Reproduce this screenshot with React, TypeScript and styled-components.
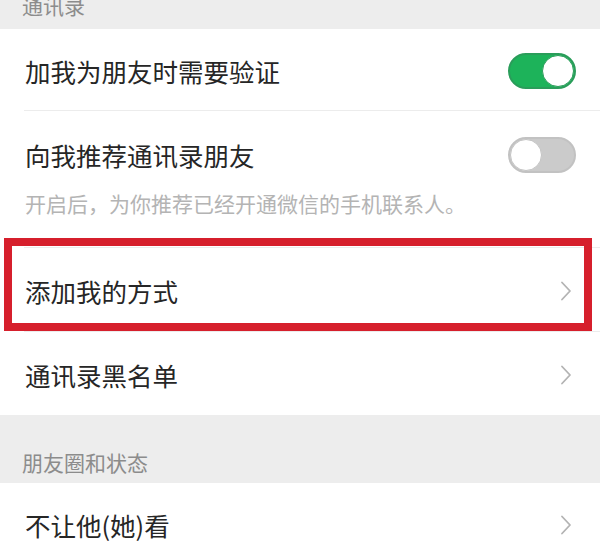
import React from "react";
import styled, { createGlobalStyle } from "styled-components";

const GlobalStyle = createGlobalStyle`
  html, body {
    margin: 0;
    padding: 0;
    background: #ededed;
    overflow: hidden;
  }
  body {
    font-family: "Noto Sans CJK SC", "Noto Sans", sans-serif;
    -webkit-font-smoothing: antialiased;
  }
`;

const Page = styled.div`
  width: 600px;
  height: 542px;
  overflow: hidden;
  display: flex;
  flex-direction: column;
  background: #ededed;
`;

const SectionHeader = styled.div<{ $height: number; $pb: number }>`
  height: ${(p) => p.$height}px;
  flex: none;
  box-sizing: border-box;
  display: flex;
  align-items: flex-end;
  padding: 0 22px ${(p) => p.$pb}px;
  font-size: 21px;
  line-height: 21px;
  color: #8c8c8c;
  background: #ededed;
`;

const Group = styled.div`
  background: #ffffff;
  display: flex;
  flex-direction: column;
  flex: none;
`;

const Cell = styled.div<{ $divider?: boolean; $height?: number }>`
  position: relative;
  height: ${(p) => p.$height ?? 82}px;
  box-sizing: border-box;
  padding: 2px 24px 0 25px;
  display: flex;
  align-items: center;
  justify-content: space-between;
  ${(p) =>
    p.$divider
      ? `&::after {
    content: "";
    position: absolute;
    left: 24px;
    right: 0;
    bottom: 0;
    height: 1px;
    background: #ececec;
  }`
      : ""}
`;

const StackCell = styled.div`
  position: relative;
  box-sizing: border-box;
  padding: 27px 24px 31px 25px;
  display: flex;
  flex-direction: column;
  gap: 17px;
  &::after {
    content: "";
    position: absolute;
    left: 24px;
    right: 0;
    bottom: 0;
    height: 1px;
    background: #ececec;
  }
`;

const Line = styled.div`
  display: flex;
  align-items: center;
  justify-content: space-between;
  height: 34px;
`;

const Title = styled.span`
  font-size: 25.5px;
  line-height: 34px;
  color: #262626;
  white-space: nowrap;
`;

const Hint = styled.div`
  font-size: 21px;
  line-height: 28px;
  color: #b4b4b4;
  white-space: nowrap;
`;

const Switch = styled.div<{ $on?: boolean }>`
  position: relative;
  width: 68px;
  height: 36px;
  box-sizing: border-box;
  border-radius: 18px;
  flex: none;
  background: ${(p) => (p.$on ? "#1db35a" : "#cbcbcb")};
  border: 2px solid ${(p) => (p.$on ? "#2a9d5a" : "#c2c2c2")};
  &::after {
    content: "";
    position: absolute;
    top: 0;
    ${(p) => (p.$on ? "right: 0;" : "left: 0;")}
    width: 32px;
    height: 32px;
    box-sizing: border-box;
    border-radius: 50%;
    background: #ffffff;
    border: 1px solid ${(p) => (p.$on ? "#2a9d5a" : "#c4c4c4")};
  }
`;

const ChevronBox = styled.svg`
  width: 12px;
  height: 20px;
  margin-right: 4px;
  flex: none;
`;

const Chevron = () => (
  <ChevronBox viewBox="0 0 12 20">
    <path
      d="M2 1.5 L10 10 L2 18.5"
      fill="none"
      stroke="#b3b3b3"
      strokeWidth="1.8"
      strokeLinecap="round"
      strokeLinejoin="round"
    />
  </ChevronBox>
);

const Highlight = styled.div`
  position: absolute;
  top: -10px;
  bottom: 1px;
  left: 4px;
  right: 8px;
  border: 8px solid #d61f2c;
  pointer-events: none;
  z-index: 2;
`;

export default function App() {
  return (
    <>
      <GlobalStyle />
      <Page>
        <SectionHeader $height={29} $pb={13}>通讯录</SectionHeader>
        <Group>
          <Cell $divider>
            <Title>加我为朋友时需要验证</Title>
            <Switch $on />
          </Cell>
          <StackCell>
            <Line>
              <Title>向我推荐通讯录朋友</Title>
              <Switch />
            </Line>
            <Hint>开启后，为你推荐已经开通微信的手机联系人。</Hint>
          </StackCell>
          <Cell $divider $height={84}>
            <Title>添加我的方式</Title>
            <Chevron />
            <Highlight />
          </Cell>
          <Cell $height={83}>
            <Title>通讯录黑名单</Title>
            <Chevron />
          </Cell>
        </Group>
        <SectionHeader $height={68} $pb={10}>朋友圈和状态</SectionHeader>
        <Group>
          <Cell>
            <Title>不让他(她)看</Title>
            <Chevron />
          </Cell>
        </Group>
      </Page>
    </>
  );
}
